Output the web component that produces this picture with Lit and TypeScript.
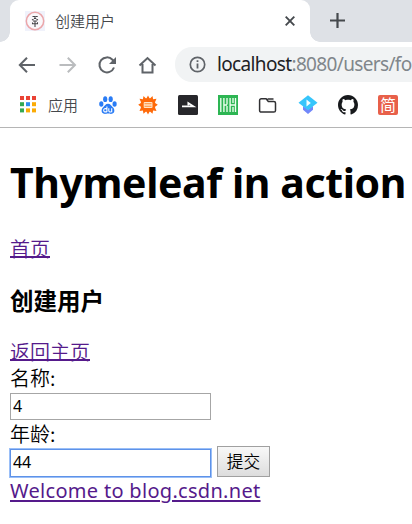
import { LitElement, html, css, svg } from "lit";
import { customElement } from "lit/decorators.js";

const bookmarks = [
  svg`<g fill="#2a7cf5"><ellipse cx="3.3" cy="9" rx="2.1" ry="2.8"/><ellipse cx="7.2" cy="4.2" rx="2.1" ry="2.9"/><ellipse cx="12.7" cy="4.2" rx="2.1" ry="2.9"/><ellipse cx="16.6" cy="9" rx="2.1" ry="2.8"/><path d="M10 8.7c2.4 0 3.2 2 4.8 3.6 2.2 2.1 2.2 5.8-.8 6.5-1.8.4-2.4-.3-4-.3s-2.300.7-4 .3c-3-.7-3-4.400-.8-6.500C6.800 10.700 7.600 8.700 10 8.700z"/></g><path d="M8.900 11.500v5.500M8.900 13.900c-2.700-.8-3.200.3-3.200 1.500s.8 1.900 3.200 1.300M10.800 13.300v2.400c0 1.300 1.500 1.400 2.900 1.100v-3.500" fill="none" stroke="#fff" stroke-width="1.100"/>`,
  svg`<path fill="#ff6a0a" d="M10 .5l1.500 2.700h.8L14.500 1l.6 3.300 3.400-.5-1.400 3.100v1l2.700 1.900-2.700 2v1l1.400 3.200-3.400-.5-.6 3.200-2.200-2h-.8L10 19.400l-1.500-2.700h-.8l-2.200 2-.6-3.200-3.400.5 1.400-3.200v-1L.2 9.800l2.700-1.900v-1L1.500 3.800l3.400.5L5.500 1l2.200 2.200h.8z"/><rect x="5.700" y="7" width="8.800" height="6" rx="1" fill="#ffe5c8"/><path d="M6.500 8.300h7v1h-7zM6.500 10.700h7v1h-7z" fill="#ff8a35"/>`,
  svg`<rect width="20" height="20" rx="1.500" fill="#27272b"/><path d="M4 11.300h11.500L10.300 8v2.200" fill="none" stroke="#fff" stroke-width="1.700"/>`,
  svg`<rect width="20" height="20" fill="#2db553"/><path d="M2.800 3v14M5.900 3v14M9 3v6.500M9 11v6M12.100 3v14M5.900 10h3.100M12.100 10h4.900M15 3v5M15 12v5M17.500 3v14" fill="none" stroke="#edffef" stroke-width="1.350"/>`,
  svg`<path d="M3.300 3.700h4.800l2.200 2.700h5.500c1 0 1.700.700 1.700 1.700v7.300c0 1-.7 1.700-1.700 1.700H3.300c-1 0-1.700-.7-1.700-1.700v-10c0-1 .7-1.700 1.700-1.700zM9.500 3.900h6" fill="none" stroke="#303033" stroke-width="1.500"/>`,
  svg`<path d="M5 11l5 3.500 5-3.500v3.700L10 19l-5-4.300z" fill="#7187fa"/><path d="M10 .3l9.500 7.400-9.500 7.600L.5 7.700z" fill="#36c5fb"/><path d="M8.500 4.500v7l4.300-3.500z" fill="#f4fdff"/>`,
  svg`<path transform="scale(1.250)" fill="#17191c" d="M8 0C3.580 0 0 3.580 0 8c0 3.540 2.290 6.530 5.470 7.590.4.070.55-.17.55-.38 0-.19-.01-.82-.01-1.490-2.010.37-2.530-.49-2.690-.94-.09-.23-.48-.94-.82-1.130-.28-.15-.68-.52-.01-.53.63-.01 1.080.58 1.230.82.72 1.210 1.870.87 2.330.66.070-.52.28-.87.51-1.070-1.780-.2-3.640-.89-3.640-3.950 0-.87.31-1.590.82-2.150-.08-.2-.36-1.020.08-2.120 0 0 .67-.21 2.200.82.64-.18 1.320-.27 2-.27s1.360.09 2 .27c1.530-1.040 2.200-.82 2.200-.82.44 1.100.16 1.920.08 2.120.51.56.82 1.270.82 2.150 0 3.070-1.870 3.750-3.650 3.950.29.25.54.73.54 1.480 0 1.070-.01 1.930-.01 2.200 0 .21.15.46.55.38A8.010 8.010 0 0016 8c0-4.420-3.580-8-8-8z"/>`,
];

@customElement("browser-chrome")
class BrowserChrome extends LitElement {
  static styles = css`
    :host { display: block; font-family: "Noto Sans", "Noto Sans CJK SC", sans-serif; color: #3c4043; }
    svg { display: block; flex: none; }
    .strip { height: 42px; background: #dee1e6; display: flex; align-items: flex-start; }
    .edge { width: 10px; height: 42px; background: #dee1e6; position: relative; }
    .edge::after { content: ""; position: absolute; width: 10px; height: 10px; left: 0; bottom: 0; background: radial-gradient(circle at 0 0, transparent 9.500px, #fff 10px); }
    .edge.right::after { background: radial-gradient(circle at 10px 0, transparent 9.500px, #fff 10px); }
    .tab { box-sizing: border-box; width: 300px; height: 42px; background: #fff; border-radius: 9px 9px 0 0; display: flex; padding: 11px 15px 0; }
    .title { font: 15px/20px "Noto Sans CJK SC", sans-serif; font-weight: 350; margin-left: 10px; flex: 1; color: #45484c; }
    .plus { margin: 13px 0 0 10px; }
    .close { margin-top: 5px; }
    .toolbar { height: 45px; display: flex; align-items: center; padding-left: 17px; gap: 20px; box-sizing: border-box; }
    .omnibox { height: 35px; border-radius: 17px 0 0 17px; background: #f1f3f4; flex: 1; min-width: 0; margin-left: -2px; display: flex; align-items: center; padding-left: 14px; overflow: hidden; white-space: nowrap; }
    .url { margin-left: 11px; font: 19px/35px "Noto Sans", sans-serif; color: #80868b; letter-spacing: -0.650px; }
    .host { color: #202124; }
    .marks { height: 41px; box-sizing: border-box; border-bottom: 1px solid #b5b5b5; display: flex; gap: 20px; padding: 8px 0 0 18px; }
    .apps { font: 15px/20px "Noto Sans CJK SC", sans-serif; font-weight: 350; margin-left: -10px; width: 30px; color: #45484c; }
    .jian { width: 20px; height: 20px; flex: none; border-radius: 2px; background: #e8604a; color: #fff; font: 16px/19px "Noto Sans CJK SC", sans-serif; text-align: center; }
  `;
  render() {
    const dots = ["#ea4335", "#ea4335", "#ea4335", "#34a853", "#2f8df0", "#fbab05", "#34a853", "#fbab05", "#fbab05"];
    return html`
      <div class="strip">
        <div class="edge"></div>
        <div class="tab">
          <svg width="20" height="20" viewBox="0 0 20 20"><rect width="20" height="20" fill="#f0f2fb"/><circle cx="10" cy="10" r="8.700" fill="#faf8fb" stroke="#eba6aa" stroke-width="1.500"/><path d="M7.500 5.500h2M10.700 5.500h2M9 7.500h2.200M7 9l1.500-.8M11.500 8.200L13 9M10 5v2M8 10h4M7.500 11.500v1.300l5-.1v-1.500M10 10v6" fill="none" stroke="#454448" stroke-width="1.050"/></svg>
          <span class="title">创建用户</span>
          <svg class="close" width="10" height="10" viewBox="0 0 10 10"><path d="M.7.7l8.600 8.600M9.300.7L.7 9.300" stroke="#45494d" stroke-width="1.900"/></svg>
        </div>
        <div class="edge right"></div>
        <svg class="plus" width="15" height="15" viewBox="0 0 15 15"><path d="M7.500 0v15M0 7.500h15" stroke="#45494d" stroke-width="2.200"/></svg>
      </div>
      <div class="toolbar">
        <svg width="20" height="20" viewBox="0 0 20 20"><path d="M18 10H3.500M10 2.700L2.800 10l7.200 7.300" fill="none" stroke="#5f6368" stroke-width="2"/></svg>
        <svg width="20" height="20" viewBox="0 0 20 20"><path d="M2.500 10H17M10.800 2.700L18 10l-7.200 7.300" fill="none" stroke="#babcbe" stroke-width="2"/></svg>
        <svg width="20" height="20" viewBox="0 0 20 20"><path d="M17 12.500A7.500 7.500 0 1 1 15.500 4.800L17.500 7" fill="none" stroke="#5f6368" stroke-width="2"/><path d="M19 2v7h-7z" fill="#5f6368"/></svg>
        <svg width="20" height="20" viewBox="0 0 20 20"><path d="M2.500 10.500l8-7.500 8 7.500M5.500 9v8.500h10V9" fill="none" stroke="#5f6368" stroke-width="2"/></svg>
        <div class="omnibox">
          <svg width="17" height="17" viewBox="0 0 17 17"><circle cx="8.500" cy="8.500" r="7.200" fill="none" stroke="#5f6368" stroke-width="1.700"/><path d="M8.500 7.500v5M8.500 4.200v1.900" stroke="#5f6368" stroke-width="1.800"/></svg>
          <span class="url"><span class="host">localhost</span>:8080/users/fo</span>
        </div>
      </div>
      <div class="marks">
        <svg width="20" height="20" viewBox="0 0 20 20">${dots.map((c, i) => svg`<rect x=${2 + (i % 3) * 6} y=${1 + Math.floor(i / 3) * 6.200} width="4" height="4" fill=${c}/>`)}</svg>
        <span class="apps">应用</span>
        ${bookmarks.map((b) => html`<svg width="20" height="20" viewBox="0 0 20 20">${b}</svg>`)}
        <span class="jian">简</span>
      </div>`;
  }
}

@customElement("text-field")
class TextField extends LitElement {
  static properties = { label: {}, value: {}, focused: { type: Boolean, reflect: true } };
  static styles = css`
    :host { display: block; width: 201px; color: #000; }
    .label { display: block; font: 20px/28px "Noto Sans CJK SC", sans-serif; font-weight: 350; height: 29px; }
    .box { display: block; box-sizing: border-box; width: 201px; height: 27px; border: 1px solid #a6a6a6; padding: 0 0 2px 2px; margin: 0; font: 16px/22px "Noto Sans", sans-serif; color: #000; background: #fff; outline: none; letter-spacing: -0.200px; }
    .focus { height: 28px; border-color: #5e92e8; box-shadow: 0 0 0 1px #9abff8; padding-bottom: 3px; }
  `;
  declare label: string;
  declare value: string;
  declare focused: boolean;
  render() {
    return html`<label class="label">${this.label}</label><input class="box ${this.focused ? "focus" : ""}" .value=${this.value} />`;
  }
}

@customElement("app-root")
class AppRoot extends LitElement {
  static styles = css`
    :host { display: block; width: 412px; height: 524px; overflow: hidden; background: #fff; color: #000; }
    .page { padding: 27px 0 0 10px; white-space: nowrap; font: 20px/26px "Noto Sans CJK SC", sans-serif; font-weight: 350; }
    h1 { margin: 0; font: bold 41px/55px "Noto Sans", sans-serif; height: 56px; letter-spacing: -0.400px; }
    h3 { margin: 25px 0 0; font: bold 23.500px/34px "Noto Sans CJK SC", sans-serif; }
    a { display: block; width: max-content; color: #551a8b; text-decoration: none; border-bottom: 2px solid #551a8b; line-height: 22px; height: 18px; }
    .home { margin-top: 27px; }
    .back { margin-top: 24px; }
    .name { margin-top: 3px; }
    .row { display: flex; align-items: flex-end; gap: 6px; }
    button { box-sizing: border-box; width: 53px; height: 31px; padding: 0; border: 1px solid #a0a0a0; background: linear-gradient(#f8f8f8, #dddddd); font: 16.700px/25px "Noto Sans CJK SC", sans-serif; font-weight: 350; color: #000; }
    .welcome { font-family: "Noto Sans", sans-serif; font-weight: 400; letter-spacing: 0.300px; text-decoration: underline; text-decoration-thickness: 2px; text-underline-offset: 2px; border: 0; margin-top: 3px; }
  `;
  render() {
    return html`
      <browser-chrome></browser-chrome>
      <div class="page">
        <h1>Thymeleaf in action</h1>
        <a class="home">首页</a>
        <h3>创建用户</h3>
        <a class="back">返回主页</a>
        <text-field class="name" label="名称:" value="4"></text-field>
        <div class="row">
          <text-field label="年龄:" value="44" focused></text-field>
          <button>提交</button>
        </div>
        <a class="welcome">Welcome to blog.csdn.net</a>
      </div>`;
  }
}
